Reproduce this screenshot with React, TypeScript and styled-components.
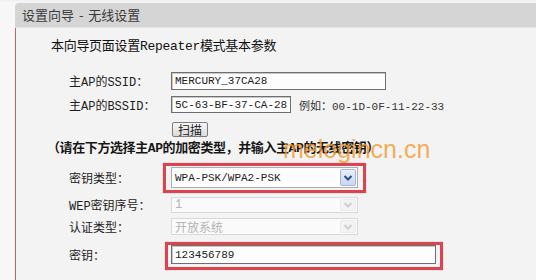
import styled, { createGlobalStyle } from "styled-components"

const GlobalStyle = createGlobalStyle`
  html, body {
    margin: 0;
    padding: 0;
    background: #f7f7f7;
  }
  * {
    box-sizing: border-box;
  }
`

const FONT = `"Liberation Mono", "Noto Sans CJK SC", monospace`

const Page = styled.div`
  width: 536px;
  height: 280px;
  overflow: hidden;
  padding: 3px 0 0 15px;
  background: linear-gradient(#efefef, #f7f7f7 3px);
  font-family: ${FONT};
`

const Panel = styled.div`
  display: flex;
  flex-flow: column;
  height: 277px;
`

const Header = styled.div`
  height: 25px;
  background: #d5d5d5;
  border-top-left-radius: 4px;
  border-bottom: 1px solid #e6e6e6;
  padding-left: 7px;
  font-family: "Noto Sans CJK SC", sans-serif;
  font-size: 13px;
  line-height: 24px;
  color: #3a3a3a;
  word-spacing: 2px;
`

const Body = styled.div`
  flex: 1;
  position: relative;
  background: #f3f3f3;
  border-left: 1px solid #b8675f;
  padding: 12px 0 0 35px;
`

const Intro = styled.div`
  font-size: 13px;
  line-height: 14px;
  color: #111;
  letter-spacing: -0.3px;
`

const Form = styled.div`
  display: flex;
  flex-flow: column;
  align-items: flex-start;
  margin-left: 18px;
`

const Row = styled.div<{ $top: number; $h: number }>`
  display: flex;
  align-items: center;
  margin-top: ${({ $top }) => $top}px;
  height: ${({ $h }) => $h}px;
`

const Label = styled.div`
  width: 102px;
  font-size: 12px;
  color: #1d1d1d;
  white-space: nowrap;
`

const Input = styled.div<{ $w: number }>`
  width: ${({ $w }) => $w}px;
  height: 100%;
  background: #fdfdfd;
  border: 1px solid #6e6e6e;
  box-shadow: inset 1px 1px 0 #c9c9c9;
  padding-left: 3px;
  font-size: 11px;
  color: #222;
  display: flex;
  align-items: center;
  white-space: nowrap;
`

const Example = styled.span`
  margin-left: 8px;
  font-size: 11px;
  color: #333;
  white-space: nowrap;
`

const ScanButton = styled.button`
  height: 100%;
  width: 36px;
  margin-left: 1px;
  padding: 0;
  border: 1px solid #7d7d7d;
  border-radius: 2px;
  background: linear-gradient(#f6f6f6, #dcdcdc);
  font-family: "Noto Sans CJK SC", sans-serif;
  font-size: 12px;
  line-height: 12px;
  color: #222;
`

const Hint = styled.div`
  margin-top: 5px;
  margin-left: -22px;
  height: 14px;
  font-size: 13px;
  line-height: 14px;
  font-weight: bold;
  color: #161616;
  white-space: nowrap;
  letter-spacing: -0.4px;
`

const Select = styled.div<{ $disabled?: boolean }>`
  width: 187px;
  height: 100%;
  display: flex;
  align-items: stretch;
  background: ${({ $disabled }) => ($disabled ? "#fafafa" : "#fdfdfd")};
  border: 1px solid ${({ $disabled }) => ($disabled ? "#d9d9d9" : "#a9aebb")};
  font-size: ${({ $disabled }) => ($disabled ? "12px" : "11px")};
  color: ${({ $disabled }) => ($disabled ? "#b4b4b4" : "#222")};
`

const SelectValue = styled.div`
  flex: 1;
  padding-left: 3px;
  display: flex;
  align-items: center;
  white-space: nowrap;
`

const Arrow = styled.div<{ $disabled?: boolean }>`
  width: 16px;
  margin: 1px;
  display: flex;
  align-items: center;
  justify-content: center;
  border: 1px solid ${({ $disabled }) => ($disabled ? "#ececec" : "#a9b8d4")};
  border-radius: 2px;
  background: ${({ $disabled }) =>
    $disabled ? "#f3f3f3" : "linear-gradient(#e9eff9, #c9d7ef)"};
  color: ${({ $disabled }) => ($disabled ? "#cfcfcf" : "#2c4f8c")};
`

const Highlight = styled.div<{ $inset: string }>`
  position: relative;
  height: 100%;
  &::after {
    content: "";
    position: absolute;
    inset: ${({ $inset }) => $inset};
    border: 3px solid #d9444e;
    box-shadow: 0 0 1px rgba(217, 68, 78, 0.6);
    pointer-events: none;
  }
`

const Watermark = styled.div`
  position: absolute;
  left: 267px;
  top: 106px;
  font-family: "Liberation Sans", sans-serif;
  font-size: 25px;
  line-height: 30px;
  color: rgba(242, 152, 40, 0.78);
  pointer-events: none;
`

const Chevron = () => (
  <svg width="10" height="8" viewBox="0 0 10 8">
    <path d="M1.5 2 L5 5.5 L8.5 2" fill="none" stroke="currentColor" strokeWidth="2" />
  </svg>
)

const SelectField = ({ value, disabled }: { value: string; disabled?: boolean }) => (
  <Select $disabled={disabled}>
    <SelectValue>{value}</SelectValue>
    <Arrow $disabled={disabled}>
      <Chevron />
    </Arrow>
  </Select>
)

export default function App() {
  return (
    <Page>
      <GlobalStyle />
      <Panel>
        <Header>设置向导 - 无线设置</Header>
        <Body>
          <Intro>本向导页面设置Repeater模式基本参数</Intro>
          <Form>
            <Row $top={18} $h={18}>
              <Label>主AP的SSID：</Label>
              <Input $w={215}>MERCURY_37CA28</Input>
            </Row>
            <Row $top={6} $h={17}>
              <Label>主AP的BSSID：</Label>
              <Input $w={120}>5C-63-BF-37-CA-28</Input>
              <Example>例如：00-1D-0F-11-22-33</Example>
            </Row>
            <Row $top={9} $h={15}>
              <Label />
              <ScanButton>扫描</ScanButton>
            </Row>
            <Hint>（请在下方选择主AP的加密类型，并输入主AP的无线密钥）</Hint>
            <Row $top={11} $h={21}>
              <Label>密钥类型：</Label>
              <Highlight $inset="-4px -8px -5px -8px">
                <SelectField value="WPA-PSK/WPA2-PSK" />
              </Highlight>
            </Row>
            <Row $top={9} $h={16}>
              <Label>WEP密钥序号：</Label>
              <SelectField value="1" disabled />
            </Row>
            <Row $top={5} $h={17}>
              <Label>认证类型：</Label>
              <SelectField value="开放系统" disabled />
            </Row>
            <Row $top={10} $h={19}>
              <Label>密钥：</Label>
              <Highlight $inset="-3px -7px -6px -6px">
                <Input $w={265}>123456789</Input>
              </Highlight>
            </Row>
          </Form>
          <Watermark>melogincn.cn</Watermark>
        </Body>
      </Panel>
    </Page>
  )
}
